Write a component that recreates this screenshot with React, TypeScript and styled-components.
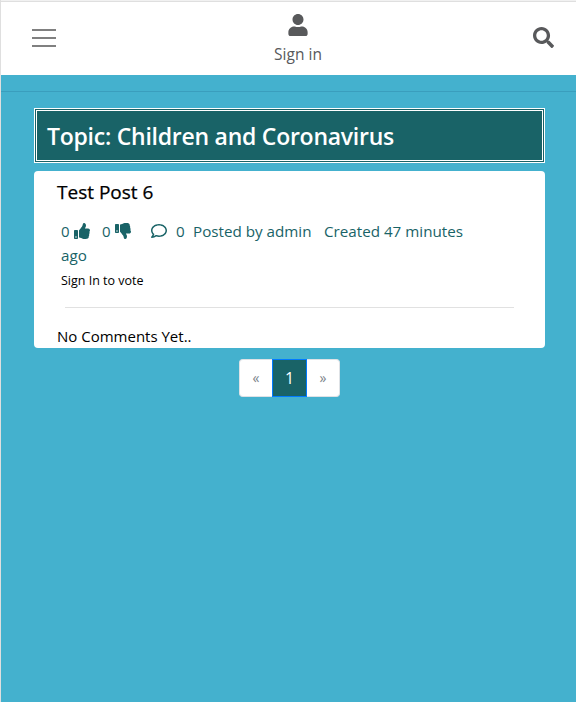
import React from "react";
import styled, { createGlobalStyle } from "styled-components";
import { FaRegComment, FaSearch, FaThumbsDown, FaThumbsUp, FaUser } from "react-icons/fa";

const GlobalStyle = createGlobalStyle`
  * { box-sizing: border-box; }
  body {
    margin: 0;
    background: #44b1ce;
    font-family: "Open Sans", "Noto Sans", sans-serif;
    font-size: 15px;
    line-height: 24px;
    color: #000;
  }
  svg { display: block; flex: none; }
`;

const Page = styled.div`
  height: 702px;
  overflow: hidden;
  border-left: 1px solid #dfdfdf;
`;

const TopEdge = styled.div`
  height: 2px;
  margin-left: -1px;
  background: #f1f1f1;
  border-bottom: 1px solid #dfdfdf;
`;

const Header = styled.header`
  height: 73px;
  background: #fff;
  color: #58595b;
  display: grid;
  grid-template-columns: 241px 111px 1fr;
  align-items: start;
  padding: 0 22px 0 31px;
`;

const MenuButton = styled.div`
  width: 24px;
  margin-top: 27px;
  display: grid;
  gap: 6px;
`;

const MenuBar = styled.span`
  height: 2px;
  background: #808080;
`;

const SignIn = styled.a`
  width: 50px;
  display: flex;
  flex-direction: column;
  align-items: center;
  gap: 6px;
  padding-top: 12px;
`;

const SearchButton = styled.div`
  justify-self: end;
  margin-top: 25px;
`;

const Label = styled.span<{ $size?: number; $spacing?: number }>`
  font-size: ${(p) => p.$size ?? 15.2}px;
  letter-spacing: ${(p) => p.$spacing ?? 0}px;
  white-space: nowrap;
`;

const Divider = styled.hr`
  height: 1px;
  margin: 16px 0;
  border: 0;
  background: #3a9ebd;
`;

const Content = styled.main`
  width: 511px;
  margin-left: 33px;
`;

const TopicTitle = styled.h1`
  height: 55px;
  margin: 0 0 8px;
  padding: 11px 10px 0;
  border: 3px double #fff;
  background: #196367;
  color: #fff;
  font-size: 23px;
  font-weight: 600;
  line-height: 29px;
  letter-spacing: -0.25px;
`;

const Card = styled.article`
  height: 177px;
  background: #fff;
  border-radius: 4px;
  padding: 9px 23px 0;
`;

const PostTitle = styled.h2`
  margin: 0;
  font-size: 19px;
  font-weight: 500;
  line-height: 24px;
  -webkit-text-stroke: 0.25px #000;
`;

const Meta = styled.div`
  color: #196367;
  padding: 15px 0 0 4px;
`;

const MetaRow = styled.div`
  display: flex;
  align-items: center;
`;

const Count = styled.span`
  width: 13px;
`;

const Reaction = styled.span`
  display: flex;
  align-items: center;
  width: 41px;
`;

const Comments = styled.span`
  display: flex;
  align-items: center;
  gap: 9px;
  width: 42px;
  margin-left: 8px;
`;

const Posted = styled.div`
  width: 131px;
`;

const Vote = styled.div`
  padding-left: 4px;
`;

const CardRule = styled.hr`
  height: 1px;
  margin: 14px 8px 16px;
  border: 0;
  background: #e1e1e1;
`;

const Pagination = styled.nav`
  width: 101px;
  height: 38px;
  margin: 11px 0 0 205px;
  display: grid;
  grid-template-columns: 33px 35px 33px;
`;

const PageLink = styled.a<{ $active?: boolean; $side?: "left" | "right" }>`
  display: flex;
  align-items: center;
  justify-content: center;
  font-size: ${(p) => (p.$active ? 16 : 14)}px;
  color: ${(p) => (p.$active ? "#fff" : "#7b838a")};
  background: ${(p) => (p.$active ? "#196367" : "#fff")};
  border: 1px solid ${(p) => (p.$active ? "#007bff" : "#dee2e6")};
  border-left-width: ${(p) => (p.$side === "right" ? 0 : 1)}px;
  border-right-width: ${(p) => (p.$side === "left" ? 0 : 1)}px;
  border-radius: ${(p) => (p.$side === "left" ? "4px 0 0 4px" : p.$side === "right" ? "0 4px 4px 0" : "0")};
`;

export default function App() {
  return (
    <>
      <GlobalStyle />
      <Page>
        <TopEdge />
        <Header>
          <MenuButton>
            <MenuBar />
            <MenuBar />
            <MenuBar />
          </MenuButton>
          <SignIn>
            <FaUser size={22} />
            <Label $size={15.5}>Sign in</Label>
          </SignIn>
          <SearchButton>
            <FaSearch size={21} />
          </SearchButton>
        </Header>
        <Divider />
        <Content>
          <TopicTitle>Topic: Children and Coronavirus</TopicTitle>
          <Card>
            <PostTitle>Test Post 6</PostTitle>
            <Meta>
              <MetaRow>
                <Reaction>
                  <Count>0</Count>
                  <FaThumbsUp size={16} />
                </Reaction>
                <Reaction>
                  <Count>0</Count>
                  <FaThumbsDown size={16} />
                </Reaction>
                <Comments>
                  <FaRegComment size={16} />
                  <Label>0</Label>
                </Comments>
                <Posted>
                  <Label>Posted by admin</Label>
                </Posted>
                <Label>Created 47 minutes</Label>
              </MetaRow>
              <Label>ago</Label>
            </Meta>
            <Vote>
              <Label $size={12.5}>Sign In to vote</Label>
            </Vote>
            <CardRule />
            <Label $size={15}>No Comments Yet..</Label>
          </Card>
          <Pagination>
            <PageLink $side="left">«</PageLink>
            <PageLink $active>1</PageLink>
            <PageLink $side="right">»</PageLink>
          </Pagination>
        </Content>
      </Page>
    </>
  );
}
